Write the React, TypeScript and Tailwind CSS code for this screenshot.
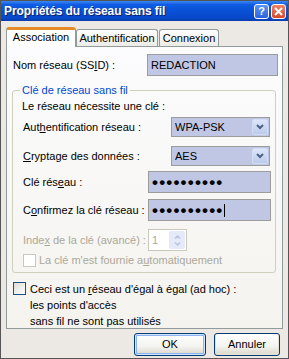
import type { ReactNode } from "react";

function TitleBar() {
  return (
    <div className="h-[20px] flex items-center pl-[3px] pr-[2px] bg-[linear-gradient(to_bottom,#3c87f2_0%,#0f5ce2_18%,#0a50d6_50%,#0848cb_85%,#0a3ea8_100%)]">
      <span className="flex-1 text-white font-bold text-[12px] [text-shadow:1px_1px_0_#0a1f6a] tracking-[-0.1px]">
        Propriétés du réseau sans fil
      </span>
      <div className="flex gap-[2px]">
        <div className="w-[15px] h-[15px] rounded-[3px] border border-white flex items-center justify-center bg-[linear-gradient(to_bottom,#5a94f5,#2a63e0)] text-white font-bold text-[11px] leading-none">
          ?
        </div>
        <div className="w-[15px] h-[15px] rounded-[3px] border border-white flex items-center justify-center bg-[linear-gradient(to_bottom,#ee8566,#d8472a)]">
          <svg width="9" height="9" viewBox="0 0 9 9">
            <path d="M1 1 L8 8 M8 1 L1 8" stroke="white" strokeWidth="2" />
          </svg>
        </div>
      </div>
    </div>
  );
}

function Tabs() {
  return (
    <div className="h-[25px] flex items-end relative z-10">
      <div className="w-[70px] h-[20px] -mb-px bg-white border-x border-[#919b9c] border-t-[3px] border-t-[#e68b2c] rounded-t-[3px] flex items-center justify-center pb-[2px]">
        Association
      </div>
      <div className="w-[82px] h-[17px] border border-b-0 border-[#919b9c] rounded-t-[3px] bg-[linear-gradient(to_bottom,#ffffff,#ecebe6)] flex items-center justify-center">
        Authentification
      </div>
      <div className="ml-[1px] w-[60px] h-[17px] border border-b-0 border-[#919b9c] rounded-t-[3px] bg-[linear-gradient(to_bottom,#ffffff,#ecebe6)] flex items-center justify-center">
        Connexion
      </div>
    </div>
  );
}

function U({ children }: { children: ReactNode }) {
  return <span className="underline underline-offset-[1px]">{children}</span>;
}

function TextBox({ children, className = "" }: { children?: ReactNode; className?: string }) {
  return (
    <div className={`h-[22px] border border-[#9c9c9c] bg-[#bfc7e5] flex items-center px-[3px] ${className}`}>
      {children}
    </div>
  );
}

function Combo({ value }: { value: string }) {
  return (
    <div className="w-[99px] h-[20px] border border-[#9c9c9c] bg-[#bfc7e5] flex items-stretch">
      <div className="flex-1 flex items-center pl-[3px]">{value}</div>
      <div className="w-[16px] m-[1px] rounded-[2px] border border-[#d2dcf2] bg-[linear-gradient(to_bottom,#dce6fa,#bccbec)] flex items-center justify-center">
        <svg width="8" height="6" viewBox="0 0 8 6">
          <path d="M1 1 L4 4 L7 1" stroke="#4d6185" strokeWidth="2" fill="none" />
        </svg>
      </div>
    </div>
  );
}

function Dots({ caret }: { caret?: boolean }) {
  return (
    <div className="flex items-center">
      <span className="text-[17px] leading-none tracking-[1.2px] font-bold">••••••••••</span>
      {caret && <span className="w-px h-[13px] bg-black" />}
    </div>
  );
}

function CheckBox({ disabled }: { disabled?: boolean }) {
  return (
    <div
      className={`w-[13px] h-[13px] shrink-0 border ${
        disabled
          ? "border-[#cac8bb] bg-white"
          : "border-[#1c5180] bg-[linear-gradient(135deg,#dcdcd7,#ffffff)]"
      }`}
    />
  );
}

function Panel() {
  return (
    <div className="h-[283px] border border-[#919b9c] bg-[linear-gradient(to_bottom,#fcfcfe,#f4f3ee)] flex flex-col">
      <div className="mt-[7px] pl-[6px] flex items-center">
        <div className="w-[134px]">
          Nom réseau (SS<U>I</U>D) :
        </div>
        <TextBox className="w-[131px]">REDACTION</TextBox>
      </div>

      <fieldset className="mt-[8px] ml-[5px] w-[264px] border border-[#d0d0bf] rounded-[3px] pl-[10px] pb-[3px]">
        <legend className="ml-[-3px] px-[2px] text-[#0046d5] leading-[13px]">Clé de réseau sans fil</legend>
        <div className="mt-[2px] h-[14px] flex items-center -ml-px">Le réseau nécessite une clé :</div>
        <div className="mt-[4px] flex items-center">
          <div className="w-[148px]">
            Aut<U>h</U>entification réseau :
          </div>
          <Combo value="WPA-PSK" />
        </div>
        <div className="mt-[9px] flex items-center">
          <div className="w-[148px]">
            <U>C</U>ryptage des données :
          </div>
          <Combo value="AES" />
        </div>
        <div className="mt-[5px] flex items-center">
          <div className="w-[125px]">
            Clé rés<U>e</U>au :
          </div>
          <TextBox className="w-[123px]">
            <Dots />
          </TextBox>
        </div>
        <div className="mt-[6px] flex items-center">
          <div className="w-[125px]">
            C<U>o</U>nfirmez la clé réseau :
          </div>
          <TextBox className="w-[123px]">
            <Dots caret />
          </TextBox>
        </div>
        <div className="mt-[8px] flex items-center text-[#aca899]">
          <div className="w-[125px]">
            Inde<U>x</U> de la clé (avancé) :
          </div>
          <div className="w-[39px] h-[22px] border border-[#cac8bb] bg-white flex items-stretch">
            <div className="flex-1 flex items-center pl-[3px]">1</div>
            <div className="w-[16px] m-[1px] rounded-[2px] bg-[#e4eaf7] flex flex-col items-center justify-around py-[2px]">
              <svg width="7" height="4" viewBox="0 0 7 4">
                <path d="M1 3.5 L3.5 1 L6 3.5" stroke="#b9c6e3" strokeWidth="1.5" fill="none" />
              </svg>
              <svg width="7" height="4" viewBox="0 0 7 4">
                <path d="M1 0.5 L3.5 3 L6 0.5" stroke="#b9c6e3" strokeWidth="1.5" fill="none" />
              </svg>
            </div>
          </div>
        </div>
        <div className="mt-[1px] flex items-center gap-[3px] text-[#aca899]">
          <CheckBox disabled />
          <span>
            La clé m'est fournie a<U>u</U>tomatiquement
          </span>
        </div>
      </fieldset>

      <div className="mt-[8px] pl-[6px] flex items-start gap-[4px]">
        <div className="mt-[1px]">
          <CheckBox />
        </div>
        <div className="leading-[16px]">
          <div>
            Ceci est un <U>r</U>éseau d'égal à égal (ad hoc) :
          </div>
          <div>les points d'accès</div>
          <div>sans fil ne sont pas utilisés</div>
        </div>
      </div>
    </div>
  );
}

function XpButton({ children, primary, width }: { children: ReactNode; primary?: boolean; width: string }) {
  return (
    <div
      className={`${width} h-[23px] rounded-[3px] border border-[#003c74] bg-[linear-gradient(to_bottom,#ffffff,#f3f3ef_60%,#d8d4c8)] flex items-center justify-center ${
        primary
          ? "shadow-[inset_0_0_0_1px_#cee7ff,inset_0_0_0_2px_#8cb4f2]"
          : "shadow-[inset_0_-1px_0_1px_#e3e0d5]"
      }`}
    >
      {children}
    </div>
  );
}

export default function App() {
  return (
    <div className="w-[289px] h-[359px] border border-[#555555] bg-[#ece9e4] flex flex-col font-['Liberation_Sans',Arial,sans-serif] text-[11px] text-black overflow-hidden">
      <TitleBar />
      <div className="flex-1 flex flex-col px-[5px]">
        <Tabs />
        <Panel />
        <div className="flex justify-end gap-[8px] pr-[3px] pt-[4px]">
          <XpButton primary width="w-[72px]">
            OK
          </XpButton>
          <XpButton width="w-[66px]">Annuler</XpButton>
        </div>
      </div>
    </div>
  );
}
